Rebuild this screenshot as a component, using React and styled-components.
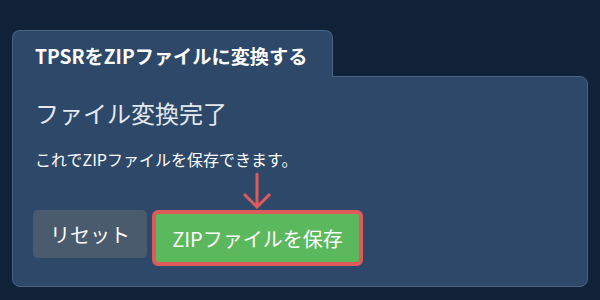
import styled, { createGlobalStyle } from "styled-components";

const Global = createGlobalStyle`
   html, body {
      margin: 0;
      background: #0f2237;
      font-family: "Noto Sans CJK JP", "Noto Sans", sans-serif;
   }
`

const Page = styled.div`
   width: 600px;
   height: 300px;
   padding: 30px 0 0 12px;
   box-sizing: border-box;
`

const Tab = styled.div`
   position: relative;
   z-index: 1;
   display: inline-flex;
   align-items: center;
   box-sizing: border-box;
   width: 321px;
   height: 47px;
   padding: 3px 22px 0;
   margin-bottom: -1px;
   background: #2d4869;
   border: 1px solid #4a6485;
   border-bottom: none;
   border-radius: 8px 8px 0 0;
   color: #ffffff;
   font-size: 19.2px;
   font-weight: bold;
`

const Panel = styled.div`
   box-sizing: border-box;
   width: 576px;
   height: 211px;
   padding: 20px 20px 0;
   background: #2d4869;
   border: 1px solid #4a6485;
   border-radius: 0 8px 8px 8px;
`

const Heading = styled.h2`
   margin: 0 0 0 2px;
   color: #e3e8ef;
   font-size: 24px;
   font-weight: normal;
   line-height: 32px;
`

const Note = styled.p`
   margin: 19px 0 0 2px;
   color: #ffffff;
   font-size: 16px;
   line-height: 22px;
`

const Actions = styled.div`
   display: flex;
   align-items: flex-start;
   gap: 5px;
   margin-top: 40px;
`

const Button = styled.button`
   box-sizing: border-box;
   border-radius: 5px;
   font-family: inherit;
   font-size: 20px;
   color: #ffffff;
   cursor: pointer;
`

const ResetButton = styled(Button)`
   width: 114px;
   height: 48px;
   border: none;
   background: #4b5b6e;
`

const SaveWrap = styled.div`
   position: relative;
`

const SaveButton = styled(Button)`
   width: 211px;
   height: 56px;
   border: 4px solid #df5b5b;
   background: #5cb85c;
   border-radius: 6px;
`

const Arrow = styled.svg`
   position: absolute;
   left: 90px;
   top: -39px;
`

export default function App() {
   return (
      <Page>
         <Global />
         <Tab>TPSRをZIPファイルに変換する</Tab>
         <Panel>
            <Heading>ファイル変換完了</Heading>
            <Note>これでZIPファイルを保存できます。</Note>
            <Actions>
               <ResetButton>リセット</ResetButton>
               <SaveWrap>
                  <Arrow width="30" height="38" viewBox="0 0 30 38">
                     <path d="M15 2 V36 M2 23 L15 36 L28 23" fill="none" stroke="#df5b5b" strokeWidth="3" />
                  </Arrow>
                  <SaveButton>ZIPファイルを保存</SaveButton>
               </SaveWrap>
            </Actions>
         </Panel>
      </Page>
   );
}
